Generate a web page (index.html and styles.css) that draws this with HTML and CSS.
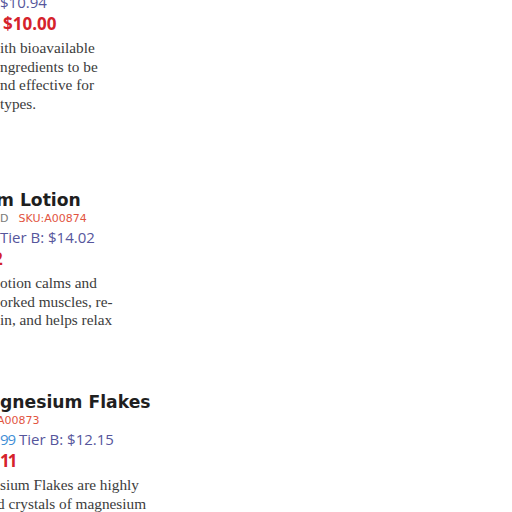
FILE: index.html
```html
<!DOCTYPE html>
<html lang="en">
<head>
<meta charset="utf-8">
<title>Products</title>
<link rel="stylesheet" href="styles.css">
</head>
<body>
<main class="list">
  <article class="card">
    <h2 class="title"></h2>
    <div class="meta"></div>
    <div class="price"><span class="tier">$10.94</span></div>
    <div class="sale indent-3">$10.00</div>
    <p class="desc">ith bioavailable<br>ngredients to be<br>nd effective for<br>types.</p>
  </article>
  <article class="card">
    <h2 class="title cut-m">m Lotion</h2>
    <div class="meta"><span class="brand">D</span><span class="sku">SKU:A00874</span></div>
    <div class="price"><span class="tier">Tier B: $14.02</span></div>
    <div class="sale cut-2">2</div>
    <p class="desc">otion calms and<br>orked muscles, re-<br>in, and helps relax</p>
  </article>
  <article class="card">
    <h2 class="title">gnesium Flakes</h2>
    <div class="meta"><span class="sku cut-a">A00873</span></div>
    <div class="price"><span class="msrp">99</span> <span class="tier">Tier B: $12.15</span></div>
    <div class="sale tight">11</div>
    <p class="desc">sium Flakes are highly<br><span class="cut-d">d</span> crystals of magnesium</p>
  </article>
</main>
</body>
</html>
```

FILE: styles.css
```css
html, body {
  margin: 0;
  padding: 0;
  background: #ffffff;
}

body {
  width: 512px;
  height: 512px;
  overflow: hidden;
}

.list {
  display: grid;
  grid-template-rows: 235px 202px auto;
  margin-top: -46px;
  width: 420px;
}

.card {
  display: flex;
  flex-direction: column;
  white-space: nowrap;
}

.title {
  margin: 0;
  height: 22px;
  font-family: "DejaVu Sans", sans-serif;
  font-weight: 700;
  font-size: 17.2px;
  line-height: 22px;
  color: #1f1f1f;
}

.meta {
  display: flex;
  gap: 10px;
  height: 16px;
  font-family: "DejaVu Sans", sans-serif;
  font-size: 11px;
  line-height: 16px;
}

.brand {
  color: #7a7a7a;
}

.sku {
  color: #e2553f;
}

.price {
  font-family: "Open Sans", sans-serif;
  font-size: 15px;
  line-height: 21px;
}

.msrp {
  color: #3f8fd6;
  letter-spacing: -1px;
}

.tier {
  color: #56569c;
}

.sale {
  font-family: "Open Sans", sans-serif;
  font-weight: 700;
  font-size: 17px;
  line-height: 21px;
  color: #d5222b;
}

.tight {
  letter-spacing: -2px;
}

.desc {
  margin: 5px 0 0;
  font-family: "Liberation Serif", serif;
  font-size: 15.3px;
  line-height: 18.6px;
  color: #3c3c3c;
}

.indent-3 {
  padding-left: 3px;
}

.cut-m {
  margin-left: -4px;
}

.cut-2 {
  margin-left: -7px;
}

.cut-a {
  margin-left: -3px;
}

.cut-d {
  margin-left: -3px;
}
```
